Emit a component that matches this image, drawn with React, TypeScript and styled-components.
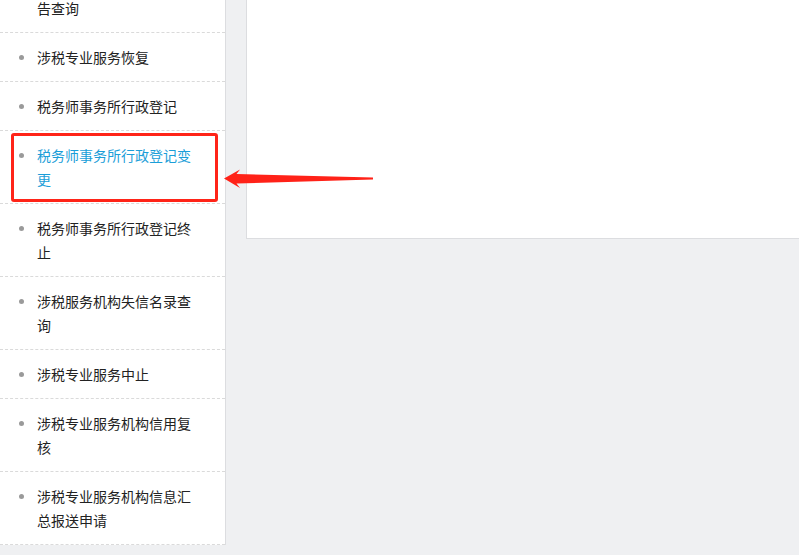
import { FC } from 'react'
import styled, { createGlobalStyle } from 'styled-components'

const GlobalStyle = createGlobalStyle`
  html, body {
    margin: 0;
    padding: 0;
    background: #eff0f2;
    overflow: hidden;
  }
  body {
    font-family: "Noto Sans CJK SC", "Noto Sans", sans-serif;
  }
`

type MenuItem = {
  label: string
  active?: boolean
}

const items: MenuItem[] = [
  { label: '涉税专业服务机构年度报告查询' },
  { label: '涉税专业服务恢复' },
  { label: '税务师事务所行政登记' },
  { label: '税务师事务所行政登记变更', active: true },
  { label: '税务师事务所行政登记终止' },
  { label: '涉税服务机构失信名录查询' },
  { label: '涉税专业服务中止' },
  { label: '涉税专业服务机构信用复核' },
  { label: '涉税专业服务机构信息汇总报送申请' },
]

const ArrowMark: FC = () => (
  <ArrowSvg width="160" height="24" viewBox="0 0 160 24">
    <polygon
      points="2,10.5 18,1.5 14.5,6 151,9.6 151,11.4 14.5,15.5 18,20"
      fill="#ff2218"
    />
  </ArrowSvg>
)

const App: FC = () => {
  return (
    <>
      <GlobalStyle />
      <Page>
        <Sidebar>
          {items.map((item) => (
            <Row key={item.label}>
              <Bullet />
              <Label $active={item.active}>{item.label}</Label>
              {item.active && <Highlight />}
            </Row>
          ))}
        </Sidebar>
        <Panel />
        <ArrowMark />
      </Page>
    </>
  )
}

export default App

const Page = styled.div`
  position: relative;
  display: flex;
  align-items: flex-start;
  gap: 20px;
  margin-top: -40px;
  width: 799px;
  height: 595px;
`
const Sidebar = styled.ul`
  list-style: none;
  margin: 0;
  padding: 0;
  width: 225px;
  flex: none;
  background: #fff;
  border-right: 1px solid #dcdde0;
`
const Row = styled.li`
  position: relative;
  display: flex;
  align-items: flex-start;
  padding: 12px 28px 12px 19px;
  border-bottom: 1px dashed #dadada;
`
const Bullet = styled.span`
  flex: none;
  width: 5px;
  height: 5px;
  margin: 10px 13px 0 0;
  border-radius: 50%;
  background: #9a9a9a;
`
const Label = styled.span<{ $active?: boolean }>`
  flex: 1;
  font-size: 14px;
  line-height: 24px;
  color: ${({ $active }) => ($active ? '#1b9ed8' : '#222')};
`
const Highlight = styled.span`
  position: absolute;
  top: 2px;
  left: 11px;
  right: 7px;
  bottom: 1px;
  border: 3px solid #ff2418;
  border-radius: 3px;
  pointer-events: none;
`
const Panel = styled.div`
  flex: 1;
  height: 278px;
  background: #fff;
  border-left: 1px solid #dcdde0;
  border-bottom: 1px solid #dcdde0;
`
const ArrowSvg = styled.svg`
  position: absolute;
  left: 222px;
  top: 208px;
`
